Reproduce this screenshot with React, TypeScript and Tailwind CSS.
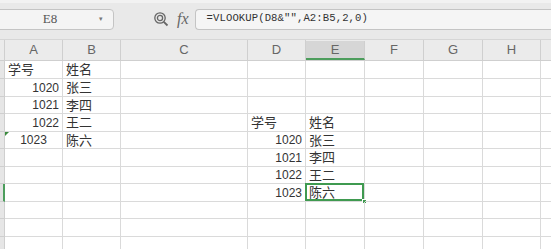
import React from "react";

const cols = [
  { name: "A", w: 58 },
  { name: "B", w: 58 },
  { name: "C", w: 127 },
  { name: "D", w: 58 },
  { name: "E", w: 59 },
  { name: "F", w: 59 },
  { name: "G", w: 59 },
  { name: "H", w: 58 },
  { name: "", w: 40 },
];

const rowHeights = [18, 18, 17, 18, 17, 18, 17, 18, 17, 18, 18];

type Cell = { text: string; align?: "left" | "right" | "center" };

// row index -> col index -> cell
const data: Record<number, Record<number, Cell>> = {
  0: { 0: { text: "学号" }, 1: { text: "姓名" } },
  1: { 0: { text: "1020", align: "right" }, 1: { text: "张三" } },
  2: { 0: { text: "1021", align: "right" }, 1: { text: "李四" } },
  3: { 0: { text: "1022", align: "right" }, 1: { text: "王二" }, 3: { text: "学号" }, 4: { text: "姓名" } },
  4: { 0: { text: "1023", align: "center" }, 1: { text: "陈六" }, 3: { text: "1020", align: "right" }, 4: { text: "张三" } },
  5: { 3: { text: "1021", align: "right" }, 4: { text: "李四" } },
  6: { 3: { text: "1022", align: "right" }, 4: { text: "王二" } },
  7: { 3: { text: "1023", align: "right" }, 4: { text: "陈六" } },
};

const cellFont = { fontFamily: '"Liberation Sans", "Noto Sans CJK SC", sans-serif' };

export default function App() {
  return (
    <div className="w-[551px] h-[249px] overflow-hidden bg-white text-[#333]" style={cellFont}>
      {/* Toolbar */}
      <div className="h-[40px] bg-[#e9e9e9] border-t-[3px] border-[#f2f2f2] border-b border-b-[#d6d6d6] flex items-center">
        <div className="w-[118px] h-[21px] -ml-[4px] mt-[-4px] bg-[#f4f4f4] border border-[#c4c4c4] rounded-[4px] flex items-center">
          <span className="flex-1 text-center pl-[4px] text-[13px] text-[#555]" style={{ fontFamily: '"Liberation Serif", serif' }}>
            E8
          </span>
          <span className="w-[14px] text-[7px] text-[#777]">▾</span>
        </div>
        <div className="ml-[39px] mt-[-4px] flex items-center">
          <svg width="16" height="16" viewBox="0 0 16 16" fill="none" stroke="#666" strokeWidth="1.3">
            <circle cx="7" cy="7" r="5.2" />
            <circle cx="7" cy="7" r="2.6" />
            <path d="M10.8 10.8 L14.5 14.5" strokeWidth="1.8" />
          </svg>
          <span
            className="ml-[8px] text-[16px] italic text-[#666]"
            style={{ fontFamily: '"Liberation Serif", serif' }}
          >
            fx
          </span>
        </div>
        <div className="ml-[6px] mt-[-4px] flex-1 h-[21px] bg-[#f5f5f5] border border-r-0 border-[#c4c4c4] rounded-l-[4px] flex items-center pl-[11px]">
          <span className="text-[10.6px] text-[#333] tracking-[0.1px]" style={{ fontFamily: '"Liberation Mono", monospace' }}>
            =VLOOKUP(D8&amp;"",A2:B5,2,0)
          </span>
        </div>
      </div>

      {/* Column headers */}
      <div className="flex h-[21px] bg-[#ebebeb] border-b border-[#cfcfcf]">
        <div className="w-[5px] shrink-0 border-r border-[#cfcfcf]" />
        {cols.map((c, i) => (
          <div
            key={i}
            className={
              c.name === "E"
                ? "shrink-0 flex items-center justify-center text-[13px] text-[#666] bg-[#d6d6d6] border-r border-[#cfcfcf] border-b-2 border-b-[#4c9d5c] mt-[1px]"
                : "shrink-0 flex items-center justify-center text-[13px] text-[#666] border-r border-[#cfcfcf]"
            }
            style={{ width: c.w }}
          >
            {c.name}
          </div>
        ))}
      </div>

      {/* Rows */}
      {rowHeights.map((h, r) => (
        <div key={r} className="flex" style={{ height: h }}>
          <div
            className={
              r === 7
                ? "w-[5px] shrink-0 bg-[#e2e2e2] border-r-2 border-r-[#4c9d5c] border-b border-[#cfcfcf]"
                : "w-[5px] shrink-0 bg-[#e6e6e6] border-r border-b border-[#cfcfcf]"
            }
          />
          {cols.map((c, ci) => {
            const cell = data[r]?.[ci];
            const selected = r === 7 && ci === 4;
            return (
              <div
                key={ci}
                className="relative shrink-0 border-r border-b border-[#dadada] flex items-center"
                style={{ width: c.w }}
              >
                {cell && (
                  <span
                    className={
                      cell.align === "right"
                        ? "w-full text-right pr-[3px] text-[12px] leading-none"
                        : cell.align === "center"
                        ? "w-full text-center text-[12px] leading-none"
                        : "w-full text-left pl-[3px] text-[13px] leading-none"
                    }
                  >
                    {cell.text}
                  </span>
                )}
                {r === 4 && ci === 0 && (
                  <span className="absolute left-0 top-0 w-0 h-0 border-t-[4px] border-t-[#3b8a3e] border-r-[4px] border-r-transparent" />
                )}
                {selected && (
                  <>
                    <span className="absolute -left-[1px] -top-[1px] right-0 bottom-0 border-2 border-[#3f9a50]" />
                    <span className="absolute -right-[3px] -bottom-[3px] w-[5px] h-[5px] bg-[#3f9a50] border border-white" />
                  </>
                )}
              </div>
            );
          })}
        </div>
      ))}
    </div>
  );
}
